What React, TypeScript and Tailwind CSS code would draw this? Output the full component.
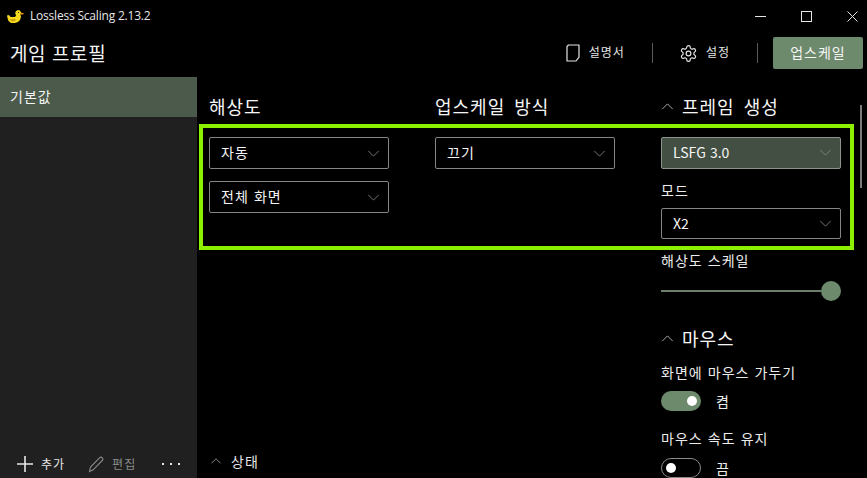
import React from "react";

const KR = "font-['Noto_Sans_CJK_KR','Noto_Sans',sans-serif]";

function Chevron({ up = false, className = "" }: { up?: boolean; className?: string }) {
  return (
    <svg width="14" height="8" viewBox="0 0 14 8" fill="none" className={className}>
      <path d={up ? "M1 7L7 1L13 7" : "M1 1L7 7L13 1"} stroke="currentColor" strokeWidth="1" />
    </svg>
  );
}

function Select({ label, active = false, latin = false }: { label: string; active?: boolean; latin?: boolean }) {
  return (
    <div
      className={`flex h-[32px] w-[180px] items-center justify-between rounded-[2px] border pl-[11px] pr-[8px] text-[14px] leading-none text-[#f5f5f5] ${
        active ? "border-[#8c948c] bg-[#434f43]" : "border-[#858585] bg-black"
      }`}
    >
      <span className={latin ? "pb-[1px] tracking-normal" : "pb-[3px]"}>{label}</span>
      <Chevron className="h-[7px] w-[13px] text-[#858585]" />
    </div>
  );
}

function Toggle({ on }: { on: boolean }) {
  return (
    <div className="flex items-center gap-[15px]">
      <div
        className={`flex h-[20px] w-[40px] items-center rounded-full px-[4px] ${
          on ? "justify-end bg-[#6d8a6d]" : "justify-start border border-[#8a8a8a]"
        }`}
      >
        <div className="h-[10px] w-[10px] rounded-full bg-white" />
      </div>
      <span className="text-[14px] leading-none text-[#ececec]">{on ? "켬" : "끔"}</span>
    </div>
  );
}

function Duck() {
  return (
    <svg width="17" height="13" viewBox="0 0 17 13">
      <path d="M0 5.5 L2 5 L3.5 7 L8 7 L9 5.5 L8.2 3 L9 1 L11 0 L13 0.5 L14 2.5 L13.5 5 L14 7 L13 10 L11 12 L8 13 L4 13 L1.5 11 L0.5 8 Z" fill="#f7d81c" />
      <path d="M3 9 L8 9 L9 10 L7 11.5 L4 11 Z" fill="#c9a20e" />
      <path d="M14 2.5 L17 3.2 L16 4.6 L13.8 4.6 Z" fill="#f08a12" />
      <rect x="11" y="2" width="1" height="1" fill="#2a2000" />
    </svg>
  );
}

export default function App() {
  return (
    <div className={`relative flex h-[478px] w-[867px] flex-col overflow-hidden bg-black tracking-[1px] text-white [word-spacing:1px] ${KR}`}>
      <div className="flex h-[32px] shrink-0 items-center justify-between">
        <div className="flex items-center gap-[6px] pl-[7px]">
          <Duck />
          <span className="font-['Open_Sans',sans-serif] text-[12px] leading-none tracking-[-0.2px] text-[#e6e6e6] [word-spacing:0]">
            Lossless Scaling 2.13.2
          </span>
        </div>
        <div className="-mr-[8px] flex items-center text-[#e6e6e6]">
          <div className="flex w-[46px] justify-center">
            <svg width="11" height="11" viewBox="0 0 11 11"><path d="M0 5.5H11" stroke="currentColor" /></svg>
          </div>
          <div className="flex w-[46px] justify-center">
            <svg width="11" height="11" viewBox="0 0 11 11"><rect x="0.5" y="0.5" width="10" height="10" fill="none" stroke="currentColor" /></svg>
          </div>
          <div className="flex w-[46px] justify-center">
            <svg width="11" height="11" viewBox="0 0 11 11"><path d="M0.5 0.5L10.5 10.5M10.5 0.5L0.5 10.5" stroke="currentColor" /></svg>
          </div>
        </div>
      </div>

      <div className="flex h-[45px] shrink-0 items-center justify-between pb-[3px] pl-[10px] pr-[4px]">
        <h1 className="mb-[2px] text-[19px] font-normal leading-none tracking-[0.6px] text-[#f5f5f5]">게임 프로필</h1>
        <div className="flex items-center">
          <div className="flex items-center gap-[9px] text-[#e4e4e4]">
            <svg width="14" height="18" viewBox="0 0 14 18" fill="none">
              <path d="M2.5 1H13V13.2L10 17H1V2.5Z" stroke="currentColor" strokeWidth="1.2" strokeLinejoin="round" />
            </svg>
            <span className="pb-[2px] text-[12px] leading-none">설명서</span>
          </div>
          <div className="ml-[27px] mr-[26px] h-[20px] w-px bg-[#5a5a5a]" />
          <div className="flex items-center gap-[8px] text-[#e4e4e4]">
            <svg width="19" height="19" viewBox="0 0 24 24" fill="none" stroke="currentColor" strokeWidth="1.5">
              <path d="M12.2 2h-.4a2 2 0 0 0-2 2v.2a2 2 0 0 1-1 1.7l-.4.3a2 2 0 0 1-2 0l-.2-.1a2 2 0 0 0-2.7.7l-.2.4a2 2 0 0 0 .7 2.7l.2.1a2 2 0 0 1 1 1.7v.5a2 2 0 0 1-1 1.8l-.2.1a2 2 0 0 0-.7 2.7l.2.4a2 2 0 0 0 2.7.7l.2-.1a2 2 0 0 1 2 0l.4.3a2 2 0 0 1 1 1.7v.2a2 2 0 0 0 2 2h.4a2 2 0 0 0 2-2v-.2a2 2 0 0 1 1-1.7l.4-.3a2 2 0 0 1 2 0l.2.1a2 2 0 0 0 2.7-.7l.2-.4a2 2 0 0 0-.7-2.7l-.2-.1a2 2 0 0 1-1-1.8v-.5a2 2 0 0 1 1-1.7l.2-.1a2 2 0 0 0 .7-2.7l-.2-.4a2 2 0 0 0-2.7-.7l-.2.1a2 2 0 0 1-2 0l-.4-.3a2 2 0 0 1-1-1.7V4a2 2 0 0 0-2-2z" />
              <circle cx="12" cy="12" r="3" />
            </svg>
            <span className="pb-[2px] text-[12px] leading-none">설정</span>
          </div>
          <div className="ml-[27px] mr-[15px] h-[20px] w-px bg-[#5a5a5a]" />
          <button className="flex h-[32px] w-[90px] items-center justify-center rounded-[2px] bg-[#6d8a6d] pb-[3px] text-[14px] leading-none text-[#f5f5f5]">
            업스케일
          </button>
        </div>
      </div>

      <div className="flex min-h-0 flex-1">
        <aside className="flex w-[197px] shrink-0 flex-col justify-between bg-[#202020]">
          <div className="flex h-[40px] items-center bg-[#4b5a4b] pb-[3px] pl-[10px] text-[14px] leading-none text-[#f5f5f5]">
            기본값
          </div>
          <div className="flex h-[28px] items-center pl-[17px]">
            <svg width="16" height="16" viewBox="0 0 16 16"><path d="M8 0V16M0 8H16" stroke="#e6e6e6" strokeWidth="1.6" /></svg>
            <span className="ml-[8px] text-[12px] leading-none text-[#e6e6e6]">추가</span>
            <svg className="ml-[23px]" width="16" height="17" viewBox="0 0 16 17" fill="none" stroke="#8a8a8a" strokeWidth="1.1">
              <path d="M1.5 15.5L2.5 11L11.5 1.8C12.3 1 13.5 1 14.3 1.8C15 2.6 15 3.7 14.2 4.5L5.2 13.8Z" />
            </svg>
            <span className="ml-[8px] text-[12px] leading-none text-[#8a8a8a]">편집</span>
            <div className="ml-[26px] flex gap-[6px]">
              <span className="h-[2px] w-[2px] bg-[#e6e6e6]" />
              <span className="h-[2px] w-[2px] bg-[#e6e6e6]" />
              <span className="h-[2px] w-[2px] bg-[#e6e6e6]" />
            </div>
          </div>
        </aside>

        <main className="relative flex min-w-0 flex-1 pl-[12px]">
          <div className="flex w-[226px] shrink-0 flex-col">
            <h2 className="mt-[17px] mb-[19px] h-[24px] text-[18px] font-normal leading-[24px] text-[#f5f5f5] [word-spacing:4px]">해상도</h2>
            <div className="flex flex-col gap-[12px]">
              <Select label="자동" />
              <Select label="전체 화면" />
            </div>
            <div className="mt-auto mb-[10px] flex items-center gap-[9px] text-[#e6e6e6]">
              <Chevron up className="ml-[1px] h-[6px] w-[12px] text-[#b0b0b0]" />
              <span className="text-[14px] leading-none">상태</span>
            </div>
          </div>

          <div className="flex w-[226px] shrink-0 flex-col">
            <h2 className="mt-[17px] mb-[19px] h-[24px] text-[18px] font-normal leading-[24px] text-[#f5f5f5] [word-spacing:4px]">업스케일 방식</h2>
            <Select label="끄기" />
          </div>

          <div className="flex w-[180px] shrink-0 flex-col">
            <h2 className="mt-[17px] mb-[19px] flex h-[24px] items-center gap-[8px] text-[18px] font-normal leading-[24px] text-[#f5f5f5] [word-spacing:4px]">
              <Chevron up className="h-[7px] w-[13px] text-[#c0c0c0]" />
              <span>프레임 생성</span>
            </h2>
            <Select label="LSFG 3.0" active latin />
            <div className="mt-[13px] mb-[10px] h-[16px] text-[14px] leading-[16px] text-[#ececec]">모드</div>
            <Select label="X2" latin />
            <div className="mt-[12px] h-[18px] text-[14px] leading-[18px] text-[#ececec]">해상도 스케일</div>
            <div className="mt-[12px] flex h-[20px] items-center">
              <div className="h-[2px] flex-1 bg-[#6d7f6d]" />
              <div className="h-[20px] w-[20px] rounded-full bg-[#6d8a6d]" />
            </div>
            <h2 className="mt-[25px] flex h-[24px] items-center gap-[8px] text-[18px] font-normal leading-[24px] text-[#f5f5f5]">
              <Chevron up className="h-[7px] w-[13px] text-[#c0c0c0]" />
              <span>마우스</span>
            </h2>
            <div className="mt-[13px] h-[18px] text-[14px] leading-[18px] text-[#ececec]">화면에 마우스 가두기</div>
            <div className="mt-[10px]"><Toggle on /></div>
            <div className="mt-[18px] h-[18px] text-[14px] leading-[18px] text-[#ececec]">마우스 속도 유지</div>
            <div className="mt-[11px]"><Toggle on={false} /></div>
          </div>

          <div className="absolute right-[5px] top-[28px] h-[83px] w-[2px] bg-[#7a7a7a]" />
        </main>
      </div>

      <div className="absolute left-[199px] top-[124px] h-[126px] w-[655px] border-[4px] border-[#8cf000]" />
    </div>
  );
}
